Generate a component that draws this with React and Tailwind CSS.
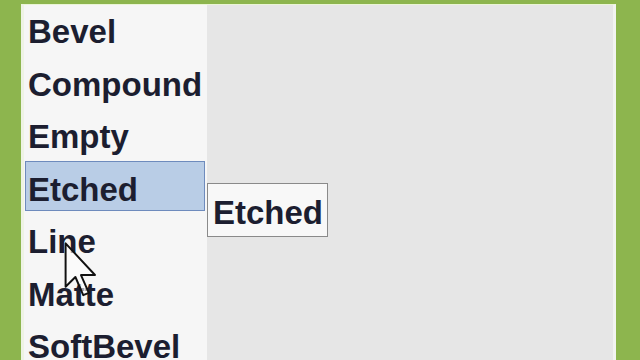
import React from "react";

const items = ["Bevel", "Compound", "Empty", "Etched", "Line", "Matte", "SoftBevel"];

export default function App() {
  return (
    <div
      className="relative w-[640px] h-[360px] overflow-hidden bg-[#8db54e] pl-[21px] pt-[4px] pr-[24px]"
      style={{ fontFamily: '"Liberation Sans", Arial, sans-serif' }}
    >
      <div className="flex h-full border-l-[3px] border-t-[1px] border-r-[3px] border-l-[#eef3e4] border-t-[#eaf5d6] border-r-[#f2f4f0] bg-[#e6e6e6]">
        <div className="w-[183px] bg-[#f6f6f6] flex flex-col pt-[1px]">
          {items.map((it) => (
            <div
              key={it}
              className={
                it === "Etched"
                  ? "h-[50px] -mt-[3px] mb-[5.5px] pt-[3px] leading-[49px] ml-[1px] mr-[2px] pl-[2px] text-[33px] font-bold text-[#1c1e30] bg-[#b9cde6] border border-[#6e8bbd] whitespace-nowrap"
                  : "h-[52.5px] leading-[52.5px] pl-[4px] text-[33px] font-bold text-[#1c1e30] whitespace-nowrap"
              }
            >
              {it}
            </div>
          ))}
        </div>
        <div className="flex-1" />
      </div>
      <div className="absolute left-[207px] top-[183px] w-[121px] h-[54px] border border-[#8a8a8a] bg-[#f8f8f8] pl-[5px] pt-[5px] text-[33px] font-bold leading-[48px] text-[#1c1e30]">
        Etched
      </div>
      <svg
        className="absolute left-[64px] top-[242px]"
        width="34"
        height="56"
        viewBox="0 0 12 20"
      >
        <path
          d="M0.5 0.5 L0.5 16 L4 12.5 L6.8 19 L8.8 18.2 L6 11.8 L11 11.8 Z"
          fill="#ffffff"
          fillOpacity="0.6"
          stroke="#111"
          strokeWidth="0.7"
          strokeLinejoin="round"
        />
      </svg>
    </div>
  );
}
